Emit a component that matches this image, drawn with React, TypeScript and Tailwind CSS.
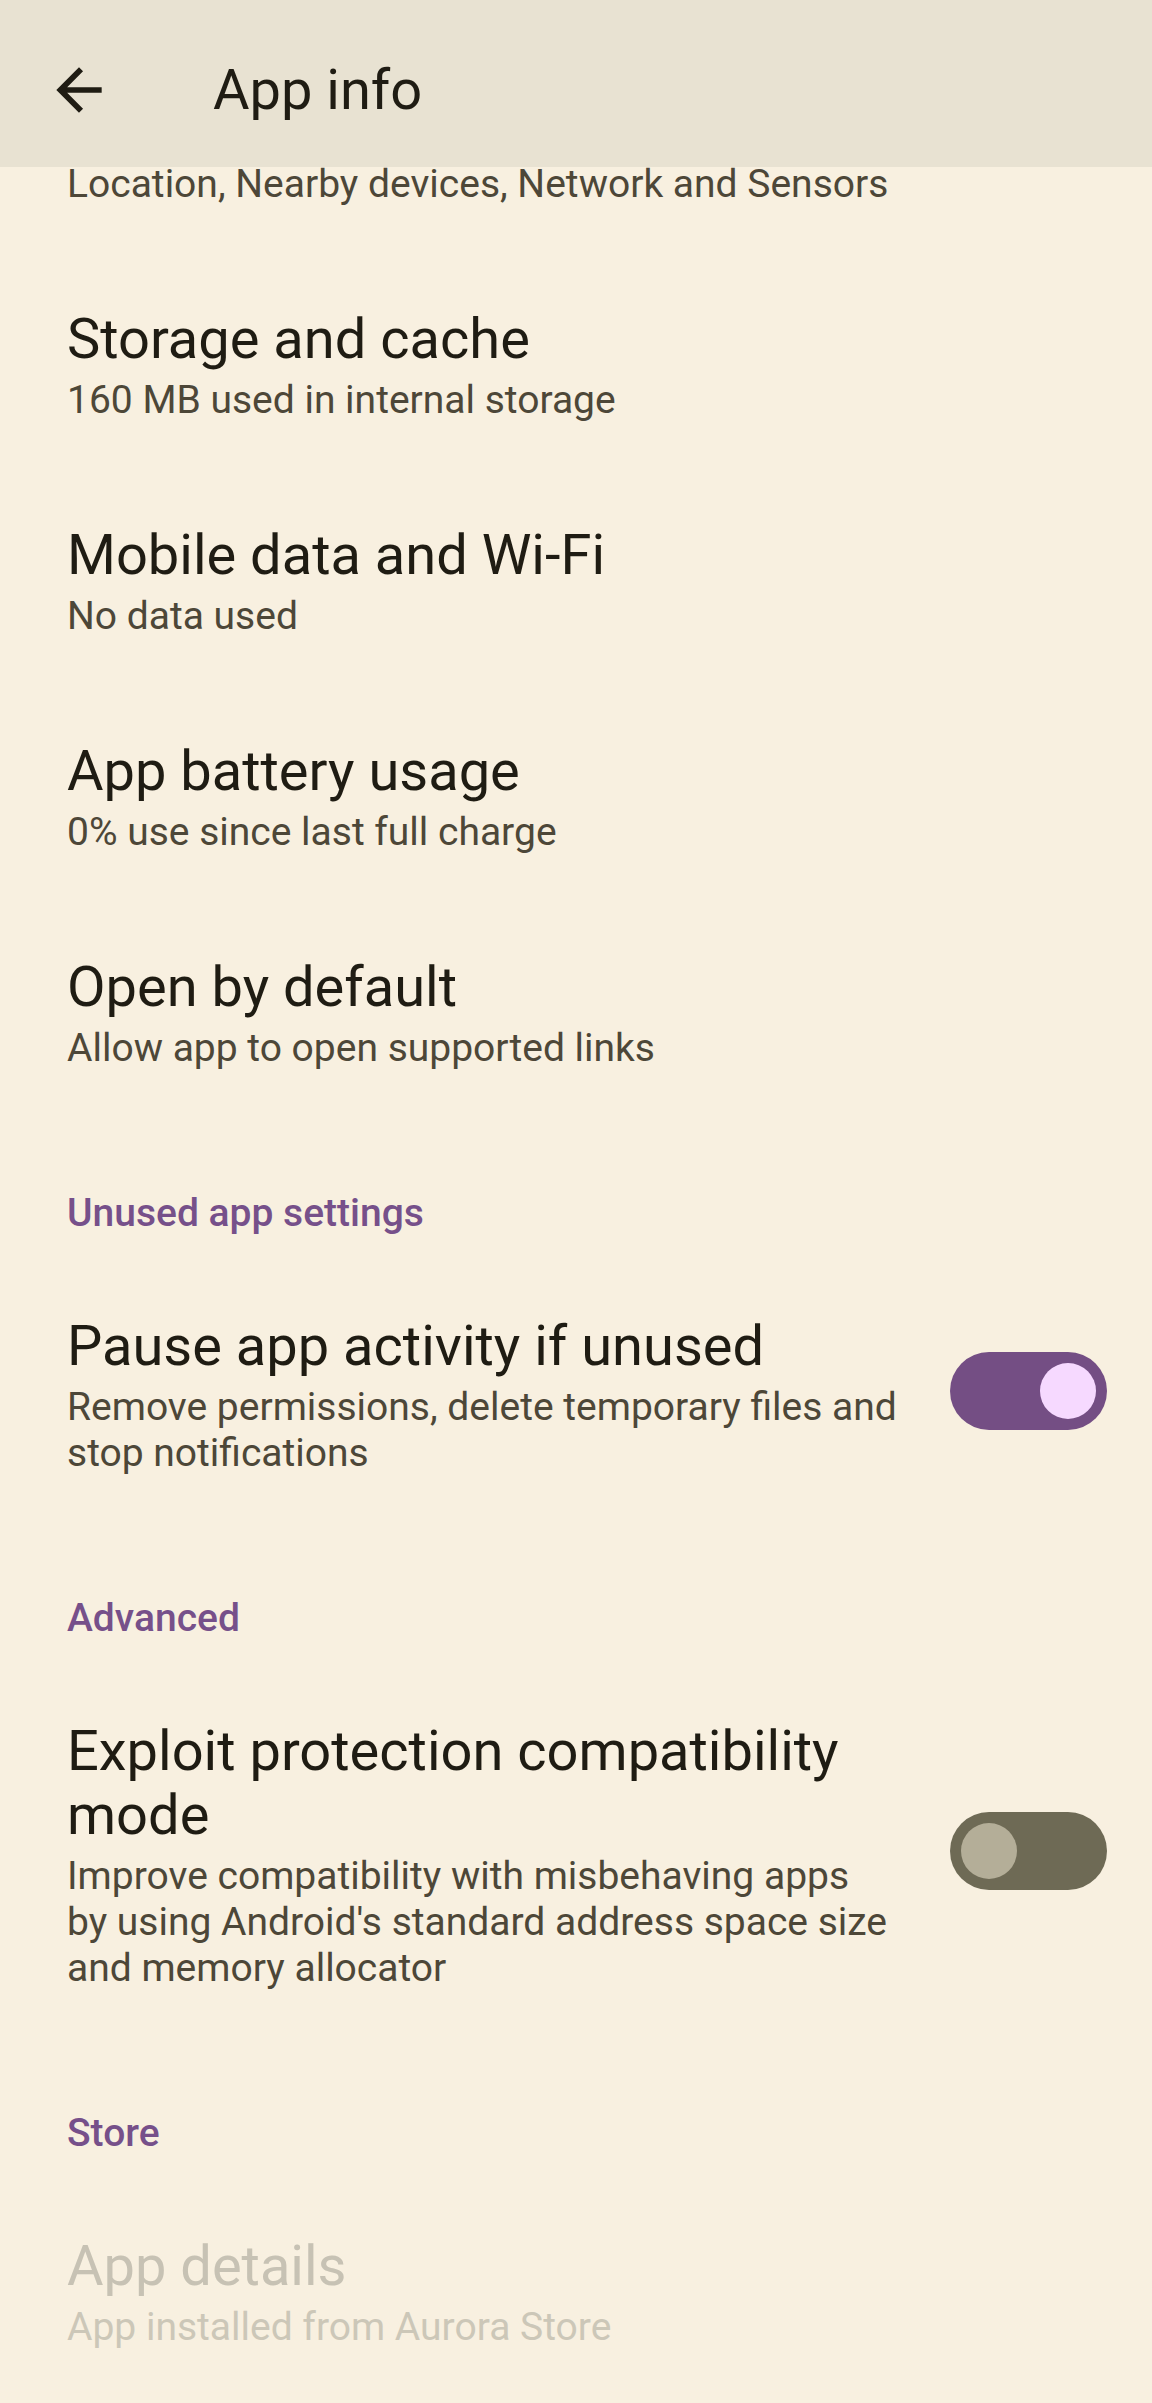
import React from "react";

interface PrefItemProps {
  title: string;
  summary: string;
  toggle?: "on" | "off";
  disabled?: boolean;
}

const Toggle: React.FC<{ checked: boolean }> = ({ checked }) => (
  <div
    className={
      checked
        ? "mb-[8px] flex h-[78px] w-[157px] shrink-0 items-center justify-end rounded-full bg-[#744e84] px-[11px]"
        : "mb-[8px] flex h-[78px] w-[157px] shrink-0 items-center justify-start rounded-full bg-[#6e6a55] px-[11px]"
    }
  >
    <div
      className={
        checked
          ? "h-[56px] w-[56px] rounded-full bg-[#f6d9ff]"
          : "h-[56px] w-[56px] rounded-full bg-[#b4ae98]"
      }
    />
  </div>
);

const PrefItem: React.FC<PrefItemProps> = ({ title, summary, toggle, disabled }) => (
  <div className="flex items-center gap-[53px] py-[50px] pl-[67px] pr-[45px]">
    <div className="min-w-0 flex-1">
      <div
        className={
          disabled
            ? "text-[56px] leading-[64px] text-[#c7c2b4]"
            : "text-[56px] leading-[64px] text-[#1f1c13]"
        }
      >
        {title}
      </div>
      <div
        className={
          disabled
            ? "mt-[6px] text-[39px] leading-[46px] text-[#ccc7b8]"
            : "mt-[6px] text-[39px] leading-[46px] text-[#4d4738]"
        }
      >
        {summary}
      </div>
    </div>
    {toggle && <Toggle checked={toggle === "on"} />}
  </div>
);

const SectionHeader: React.FC<{ label: string }> = ({ label }) => (
  <div className="mt-[69px] pb-[28px] pl-[67px] text-[39px] font-medium leading-[46px] text-[#76508a]">
    {label}
  </div>
);

export default function App() {
  return (
    <div className="flex h-[2403px] w-[1152px] flex-col overflow-hidden bg-[#f8f0e0] font-[Roboto,sans-serif]">
      {/* Top app bar */}
      <div className="flex h-[167px] shrink-0 items-center bg-[#e8e2d2] pl-[45px] pt-[12px]">
        <svg viewBox="0 -960 960 960" className="h-[68px] w-[68px] fill-[#1f1c13]">
          <path d="M313-440l224 224-57 56-320-320 320-320 57 56-224 224h487v80H313Z" />
        </svg>
        <h1 className="ml-[100px] text-[56px] leading-[64px] text-[#1f1c13]">App info</h1>
      </div>

      {/* Scrolled list */}
      <div className="min-h-0 flex-1 overflow-hidden">
        <div className="-mt-[6px] pb-[50px] pl-[67px] pr-[45px] text-[39px] leading-[46px] text-[#4d4738]">
          Location, Nearby devices, Network and Sensors
        </div>

        <PrefItem title="Storage and cache" summary="160 MB used in internal storage" />
        <PrefItem title="Mobile data and Wi-Fi" summary="No data used" />
        <PrefItem title="App battery usage" summary="0% use since last full charge" />
        <PrefItem title="Open by default" summary="Allow app to open supported links" />

        <SectionHeader label="Unused app settings" />
        <PrefItem
          title="Pause app activity if unused"
          summary="Remove permissions, delete temporary files and stop notifications"
          toggle="on"
        />

        <SectionHeader label="Advanced" />
        <PrefItem
          title="Exploit protection compatibility mode"
          summary="Improve compatibility with misbehaving apps by using Android's standard address space size and memory allocator"
          toggle="off"
        />

        <SectionHeader label="Store" />
        <PrefItem title="App details" summary="App installed from Aurora Store" disabled />
      </div>
    </div>
  );
}
